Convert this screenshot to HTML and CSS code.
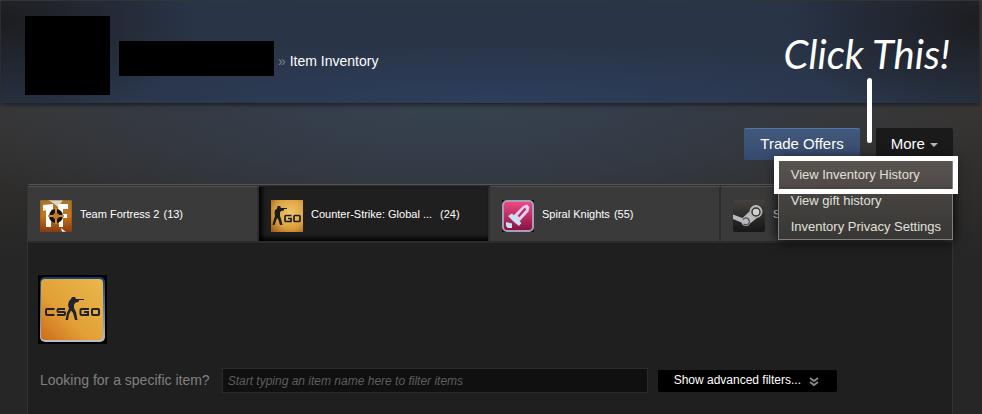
FILE: index.html
```html
<!DOCTYPE html>
<html lang="en">
<head>
  <meta charset="UTF-8">
  <meta name="viewport" content="width=device-width, initial-scale=1.0">
  <title>Item Inventory</title>
  <link rel="stylesheet" href="styles.css">
</head>
<body>

  <header class="profile-header">
    <div class="avatar"></div>
    <div class="persona"></div>
    <h1 class="crumb"><span class="arrow">»</span> Item Inventory</h1>
    <p class="note">Click This!</p>
  </header>

  <main class="content">
    <div class="actions">
      <button class="btn btn-trade">Trade Offers</button>
      <div class="more">
        <button class="btn btn-more">More <span class="caret"></span></button>
        <div class="menu">
          <a href="#" class="menu-item active">View Inventory History</a>
          <a href="#" class="menu-item">View gift history</a>
          <a href="#" class="menu-item">Inventory Privacy Settings</a>
        </div>
        <div class="pointer"></div>
      </div>
    </div>

    <div class="inventory">
      <nav class="tabs">
        <a href="#" class="tab">
          <svg class="game-icon" viewBox="0 0 32 32">
            <defs>
              <linearGradient id="tf" x1="0" y1="0" x2="0" y2="1">
                <stop offset="0" stop-color="#a5762f"/>
                <stop offset=".5" stop-color="#c4741b"/>
                <stop offset="1" stop-color="#8a3a0c"/>
              </linearGradient>
            </defs>
            <rect width="32" height="32" rx="1" fill="url(#tf)"/>
            <path d="M8 0h15l-5 7-5-4z" fill="#ddd6c8"/>
            <path d="M3 5l10-1v5l-2 1v17H6V10l-3 1zM18 4h10v5h-5v5h4v4h-4v9h-4z" fill="#fff"/>
            <path d="M21 28l5 4h-4z" fill="#fff"/>
            <circle cx="16" cy="16" r="5" fill="#c4801f" stroke="#15120e" stroke-width="4"/>
            <path d="M16 8v5M16 19v5M8 16h5M19 16h5" stroke="#d2892a" stroke-width="2"/>
            <rect width="32" height="32" fill="none" stroke="#6b4a22" stroke-opacity=".6"/>
          </svg>
          <span class="game-name">Team Fortress 2</span>
          <span class="count">(13)</span>
        </a>
        <a href="#" class="tab selected">
          <svg class="game-icon" viewBox="0 0 32 32">
            <defs>
              <radialGradient id="gold" cx=".6" cy=".4" r=".8">
                <stop offset="0" stop-color="#efc56c"/>
                <stop offset=".6" stop-color="#dca03d"/>
                <stop offset="1" stop-color="#9f601c"/>
              </radialGradient>
            </defs>
            <rect width="32" height="32" fill="url(#gold)"/>
            <path d="M6.500 6h2.500l1 2h6v1h-3v1.500l-3 .5-1 1.500v3.500l1 3 1.500 6H9l-1.500-5-1.500-2-1 3-1.500 4H1.500L3 19l1-3-.5-3L4 10l2-1.500z" fill="#1b1c1b"/>
            <path d="M20.500 15.500H15q-1 0-1 1v4q0 1 1 1h5v-3h-3" fill="none" stroke="#1b1c1b" stroke-width="1.700"/>
            <rect x="23" y="15.500" width="6" height="6" rx="1" fill="none" stroke="#1b1c1b" stroke-width="1.700"/>
          </svg>
          <span class="game-name">Counter-Strike: Global ...</span>
          <span class="count">(24)</span>
        </a>
        <a href="#" class="tab">
          <svg class="game-icon" viewBox="0 0 32 32">
            <defs>
              <linearGradient id="pink" x1="0" y1="0" x2="0" y2="1">
                <stop offset="0" stop-color="#ef4c85"/>
                <stop offset="1" stop-color="#86103f"/>
              </linearGradient>
            </defs>
            <rect width="32" height="32" fill="#111"/>
            <rect x="1" y="1" width="30" height="30" rx="4" fill="url(#pink)" stroke="#a79db8" stroke-width="2"/>
            <path d="M11 16L21 6l4-1.500 2.500 2.500-1 4.500-9 10z" fill="#e4cdee"/>
            <path d="M16.500 16.500l7-8" stroke="#b02a66" stroke-width="2"/>
            <path d="M6 16l4-2.500L19.500 23 17 26l-5-4z" fill="#bfe6f4"/>
            <path d="M4 22l6 1.500V28H6q-2-1-2-3z" fill="#c4e4f2"/>
          </svg>
          <span class="game-name">Spiral Knights</span>
          <span class="count">(55)</span>
        </a>
        <a href="#" class="tab">
          <svg class="game-icon" viewBox="0 0 32 32">
            <defs>
              <linearGradient id="steam" x1="0" y1="0" x2="0" y2="1">
                <stop offset="0" stop-color="#45423e"/>
                <stop offset="1" stop-color="#171716"/>
              </linearGradient>
            </defs>
            <rect width="32" height="32" rx="2" fill="url(#steam)"/>
            <path d="M0 14.500l9.500 3.500 7-6.500a6.500 6.500 0 1 1 7.500 6.500l-7 5.500a4.500 4.500 0 0 1-8.500-1L0 19z" fill="#b9b9bb"/>
            <circle cx="23" cy="12" r="4" fill="#d2d2d2" stroke="#34322f" stroke-width="1.500"/>
            <path d="M10 19.500a3.500 3.500 0 1 1 .5 4.500" fill="none" stroke="#4b4a48" stroke-width="1.200"/>
          </svg>
          <span class="game-name">Steam</span>
        </a>
      </nav>

      <div class="inventory-body">
        <svg class="app-logo" viewBox="0 0 69 69" role="img" aria-label="CS:GO">
          <defs>
            <linearGradient id="frame" x1="0" y1="0" x2="0" y2="1">
              <stop offset="0" stop-color="#123e78"/>
              <stop offset="1" stop-color="#b8c0cc"/>
            </linearGradient>
            <linearGradient id="sand" x1="1" y1="0" x2="0" y2="1">
              <stop offset="0" stop-color="#e9b84c"/>
              <stop offset=".6" stop-color="#e2a036"/>
              <stop offset="1" stop-color="#cf6b1a"/>
            </linearGradient>
          </defs>
          <rect width="69" height="69" fill="#000"/>
          <rect x="2" y="2" width="65" height="65" rx="5" fill="url(#frame)"/>
          <rect x="3" y="4" width="62" height="61" rx="4" fill="url(#sand)"/>
          <path d="M34 22h3l1 2h8v1h-5v1.500l-4 1.500-1 2v3l2 4 1.500 8H37l-2-7-2-2.500-2 4-1 5.500h-2.500l1.500-7 2-4.500-1-3.500 1-4 2-2z" fill="#20242a"/>
          <path d="M16.500 34H9q-1 0-1 1v4q0 1 1 1h7.500M27 34h-6.500q-1 0-1 1v1q0 1 1 1H26q1 0 1 1v1q0 1-1 1h-7M51 34h-7.500q-1 0-1 1v4q0 1 1 1H50v-3h-4" fill="none" stroke="#20242a" stroke-width="2"/>
          <rect x="54" y="34" width="7" height="6" rx="1" fill="none" stroke="#20242a" stroke-width="2"/>
        </svg>

        <div class="filter">
          <label for="filter">Looking for a specific item?</label>
          <input type="text" id="filter" placeholder="Start typing an item name here to filter items">
          <button class="advanced">Show advanced filters...
            <svg width="10" height="10" viewBox="0 0 10 10"><path d="M1 1l4 3 4-3M1 5l4 3 4-3" fill="none" stroke="#8a8a8a" stroke-width="2"/></svg>
          </button>
        </div>
      </div>
    </div>
  </main>

</body>
</html>
```
FILE: styles.css
```css
*, *::after {
  box-sizing: border-box;
}
body {
  margin: 0;
  padding: 1px 3px 0 1px;
  min-height: 100vh;
  font-family: "Liberation Sans", Arial, sans-serif;
  color: #fff;
  background: radial-gradient(ellipse 55% 170px at 46% 90px, #384452, #343c48 40%, rgba(48, 52, 62, 0)) no-repeat,
    linear-gradient(#393633 100px, #262626 260px);
}
a {
  color: inherit;
  text-decoration: none;
}
button {
  border: 0;
  color: #fff;
  font-family: inherit;
  cursor: pointer;
}
.profile-header {
  display: flex;
  align-items: center;
  height: 102px;
  padding: 0 29px 0 24px;
  background: radial-gradient(ellipse 20% 100% at 0 20%, #1c1d20, rgba(28, 29, 32, 0)),
    radial-gradient(ellipse 20% 100% at 100% 20%, #1c1d20, rgba(28, 29, 32, 0)),
    radial-gradient(ellipse 50% 60% at 50% 100%, #2d3e5c, rgba(45, 62, 92, 0)),
    #293447;
  box-shadow: 0 2px 4px #1c1e22;
}
.avatar {
  width: 85px;
  height: 79px;
  margin-top: 6px;
  background: #000;
}
.persona {
  width: 155px;
  height: 35px;
  margin: 12px 4px 0 9px;
  background: #000;
}
.crumb {
  margin: 18px 0 0;
  font-size: 14px;
  font-weight: normal;
}
.arrow {
  color: #7c8088;
}
.note {
  margin: 4px 0 0 auto;
  font-family: Lato, sans-serif;
  font-style: italic;
  font-size: 40px;
  line-height: 40px;
}
.content {
  padding: 25px 26px 0;
}
.actions {
  display: flex;
  justify-content: flex-end;
  gap: 16px;
}
.btn {
  display: block;
  height: 32px;
  padding: 0 16px 2px;
  border-radius: 2px;
  font-size: 15px;
}
.btn-trade {
  background: linear-gradient(#43597c, #364a6b);
  border-top: 1px solid #4f75a8;
}
.btn-more {
  padding: 0 15px 2px;
  background: #1a1a1a;
}
.caret {
  display: inline-block;
  margin-left: 1px;
  border: 4px solid transparent;
  border-top-color: #b5b5b5;
  border-bottom: 0;
  vertical-align: 2px;
}
.more {
  position: relative;
}
.menu {
  position: absolute;
  top: 32px;
  right: 0;
  z-index: 1;
  border: 1px solid #82807c;
  background: linear-gradient(#4f4b49, #393735);
  box-shadow: 0 0 12px #000;
  white-space: nowrap;
}
.menu-item {
  display: block;
  padding: 2px 11px 0 12px;
  font-size: 13px;
  line-height: 24px;
  color: #e0e0da;
}
.menu-item.active {
  background: linear-gradient(#5a5450, #4f4a48);
}
/* white frame around the first item */
.menu-item.active::after {
  content: "";
  position: absolute;
  top: -5px;
  left: -5px;
  right: -6px;
  height: 38px;
  border: 5px solid #fff;
}
.pointer {
  position: absolute;
  top: -50px;
  left: -9px;
  width: 5px;
  height: 65px;
  border-radius: 3px;
  background: #fff;
}
.inventory {
  margin-top: 24px;
  border: 1px solid #333;
  border-top-color: #555;
  border-bottom: 0;
  border-radius: 3px 3px 0 0;
  background: #1f1f1f;
}
.tabs {
  display: grid;
  grid-template-columns: repeat(4, 1fr);
  padding-top: 1px;
  background: #2e2e2e;
  border-bottom: 2px solid #2b2b2b;
}
.tab {
  display: flex;
  align-items: center;
  gap: 4px;
  height: 55px;
  padding: 4px 12px 0;
  border-top: 1px solid #505050;
  border-right: 2px solid #2d2d2d;
  background: #3a3a3a;
  font-size: 11px;
}
.tab:last-child {
  border-right: 0;
}
.tab.selected {
  background: #1f1f1f;
  border-top-color: #1f1f1f;
  box-shadow: inset 3px -3px 5px #000;
}
.tab.selected .game-name {
  min-width: 125px;
}
.game-icon {
  flex: none;
  width: 32px;
  height: 32px;
  margin-right: 4px;
}
.game-name, .count {
  padding-bottom: 4px;
  white-space: nowrap;
}
.inventory-body {
  min-height: calc(100vh - 243px);
  padding: 32px 10px 21px;
}
.app-logo {
  display: block;
  width: 69px;
  height: 69px;
}
.filter {
  display: flex;
  align-items: center;
  gap: 10px;
  margin: 24px 0 0 2px;
}
.filter label {
  margin-right: 2px;
  padding-bottom: 2px;
  font-size: 14px;
  color: #808080;
}
.filter input {
  width: 426px;
  height: 25px;
  padding: 0 5px;
  border: 1px solid #2b2b2b;
  background: #101010;
  color: #fff;
  font: italic 12px "Liberation Sans", Arial, sans-serif;
}
.filter input::placeholder {
  color: #5e5e5e;
}
.advanced {
  height: 22px;
  padding: 0 16px 2px;
  border-radius: 2px;
  background: #000;
  font-size: 12px;
}
.advanced svg {
  margin: 0 2px 0 5px;
  vertical-align: -3px;
}
```
